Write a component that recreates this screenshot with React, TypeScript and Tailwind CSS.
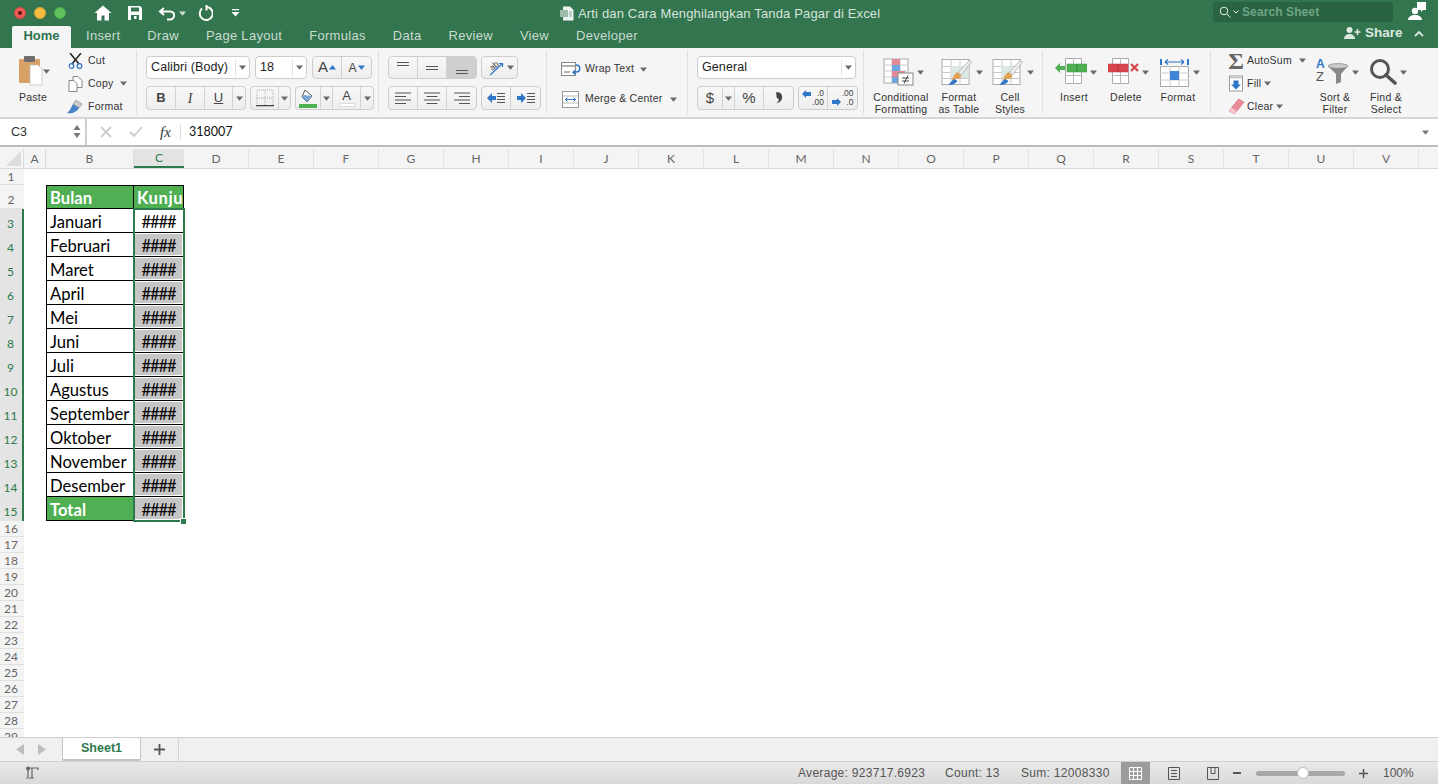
import React from "react";

const ui = { fontFamily: '"Liberation Sans", Arial, sans-serif' };
const cal = { fontFamily: 'Lato, "Liberation Sans", sans-serif' };

const Caret = ({ c = "#6a6a6a" }: { c?: string }) => (
  <svg width="7" height="5" viewBox="0 0 7 5" className="shrink-0"><path d="M0 0.5h7L3.5 4.8z" fill={c} /></svg>
);

const Seg = ({ w, children, active }: { w: number; children?: React.ReactNode; active?: boolean }) => (
  <div style={{ width: w }} className={`flex items-center justify-center border-r border-[#d2d2d2] last:border-r-0 h-full ${active ? "bg-[#cfcfcf]" : ""}`}>{children}</div>
);
const Btns = ({ children, className = "" }: { children: React.ReactNode; className?: string }) => (
  <div className={`flex h-[23px] rounded-[4px] border border-[#cdcdcd] bg-gradient-to-b from-[#f8f8f8] to-[#eeeeee] overflow-hidden ${className}`}>{children}</div>
);
const Select = ({ w, label, caretW = 14 }: { w: number; label: string; caretW?: number }) => (
  <div style={{ width: w }} className="flex items-center h-[23px] rounded-[4px] border border-[#cdcdcd] bg-white text-[12.5px] tracking-[0.1px] text-[#222] pl-[4px]">
    <span className="flex-1">{label}</span>
    <span style={{ width: caretW }} className="flex justify-center items-center border-l border-[#e2e2e2] h-[16px]"><Caret /></span>
  </div>
);

const Lines = ({ a }: { a: "l" | "c" | "r" }) => {
  const w = [16, 11, 16, 11];
  return (
    <svg width="16" height="12" viewBox="0 0 16 12">
      {[0.5, 4, 7.5, 11].map((y, i) => {
        const x = a === "l" ? 0 : a === "c" ? (16 - w[i]) / 2 : 16 - w[i];
        return <rect key={y} x={x} y={y} width={w[i]} height="1" fill="#555" />;
      })}
    </svg>
  );
};
const VAlign = ({ y }: { y: number }) => (
  <svg width="16" height="14" viewBox="0 0 16 14"><rect x="2" y={y} width="12" height="1" fill="#555" /><rect x="2" y={y + 3} width="12" height="1" fill="#555" /></svg>
);
const Indent = ({ flip }: { flip?: boolean }) => (
  <svg width="18" height="12" viewBox="0 0 18 12">
    {flip ? <path d="M0 4h4V1l5 5-5 5V8H0z" fill="#2f75c8" /> : <path d="M9 4H5V1L0 6l5 5V8h4z" fill="#2f75c8" />}
    {[1, 4, 7, 10].map((y) => <rect key={y} x="10" y={y} width="8" height="1" fill="#555" />)}
  </svg>
);

const SmallRow = ({ icon, label, caret = -1, gap }: { icon: React.ReactNode; label: string; caret?: number; gap: number }) => (
  <div className="flex items-center h-[23px] shrink-0">
    <span className="w-[20px] flex justify-center">{icon}</span>
    <span style={{ marginLeft: gap }} className="text-[10.5px] tracking-[0.25px] text-[#333]">{label}</span>
    {caret >= 0 && <span style={{ marginLeft: caret }}><Caret /></span>}
  </div>
);

const Big = ({ w, icon, l1, l2 }: { w: number; icon: React.ReactNode; l1: string; l2?: string }) => (
  <div style={{ width: w }} className="flex flex-col items-center shrink-0">
    <div className="h-[35px] shrink-0 pt-[2px] ml-[4px] flex items-start justify-center gap-[3px]">
      {icon}
      <span className="mt-[12px]"><Caret /></span>
    </div>
    <div className="text-[10.5px] leading-[12px] tracking-[0.25px] text-center text-[#333] whitespace-nowrap">{l1}{l2 && <br />}{l2}</div>
  </div>
);

const Sheetlet = ({ children }: { children?: React.ReactNode }) => (
  <svg width="33" height="28" viewBox="0 0 32 28">
    <rect x="1.5" y="1.5" width="27" height="25" fill="#fff" stroke="#aaa" />
    <path d="M1.5 8.5h27M1.5 14.5h27M1.5 20.5h27M10.5 1.5v25M19.5 1.5v25" stroke="#c9c9c9" />
    {children}
  </svg>
);
const Brush = () => (
  <>
    <path d="M29 2l2 2-10 13-3-3z" fill="#ececec" stroke="#999" strokeWidth=".6" />
    <path d="M17 14l4 4c-1 3-4 3-6 3l-3 2c-1-2 1-6 5-9z" fill="#e0a252" />
    <path d="M8 27c2-3 4-5 6-6l3 2c-2 3-6 4-9 4z" fill="#2f75c8" />
  </>
);

const tabs = ["Insert", "Draw", "Page Layout", "Formulas", "Data", "Review", "View", "Developer"];
const cols = "DEFGHIJKLMNOPQRSTUV".split("");
const months = ["Januari", "Februari", "Maret", "April", "Mei", "Juni", "Juli", "Agustus", "September", "Oktober", "November", "Desember"];
const thin = Array.from({ length: 14 }, (_, i) => i + 16);

export default function App() {
  return (
    <div style={ui} className="w-[1438px] h-[784px] overflow-hidden flex flex-col bg-white relative">
      {/* Title + tabs */}
      <div className="h-[48px] bg-[#33754f] shrink-0 flex flex-col">
        <div className="h-[26px] flex items-center relative">
          <div className="flex items-center gap-[8px] ml-[14px]">
            <span className="w-[12px] h-[12px] rounded-full bg-[#ee5b53] border border-[#d34a43] flex items-center justify-center"><span className="w-[4px] h-[4px] rounded-full bg-[#5c1410]" /></span>
            <span className="w-[12px] h-[12px] rounded-full bg-[#f5bd3f] border border-[#dca62f]" />
            <span className="w-[12px] h-[12px] rounded-full bg-[#5fc25a] border border-[#4dab49]" />
          </div>
          <div className="ml-[28px] flex items-center">
            <svg width="18" height="16" viewBox="0 0 18 16"><path d="M9 0.5L0.5 8h2.5v7.5h4.5V10.5h3v5H15V8h2.5z" fill="#fff" /></svg>
            <svg className="ml-[15px]" width="16" height="16" viewBox="0 0 16 16"><path d="M1 1h12l2 2v12H1z" fill="#fff" /><rect x="4" y="2.5" width="8" height="4" fill="#33754f" /><rect x="4" y="10" width="8" height="5" fill="#33754f" /><rect x="7" y="11" width="2.5" height="3" fill="#fff" /></svg>
            <svg className="ml-[15px]" width="18" height="16" viewBox="0 0 18 16"><path d="M6 3L2 6.5 6 10M2.5 6.5H12c6 0 5 8 0 8H9" fill="none" stroke="#fff" strokeWidth="2" /></svg>
            <span className="ml-[3px]"><svg width="7" height="5" viewBox="0 0 7 5"><path d="M0 .5h7L3.5 4.8z" fill="#cfe0d6" /></svg></span>
            <svg className="ml-[11px]" width="16" height="16" viewBox="0 0 16 16"><path d="M5 3.5a6.5 6.5 0 1 0 5-1.5M9.500 0v5.500" fill="none" stroke="#fff" strokeWidth="2" /></svg>
            <svg className="ml-[18px]" width="9" height="8" viewBox="0 0 9 8"><rect x="1" y="0" width="7" height="1.3" fill="#fff" /><path d="M0.5 3h8L4.5 7.5z" fill="#fff" /></svg>
          </div>
          <div className="absolute left-[560px] top-[4px] flex items-center gap-[4px] text-[13px] tracking-[0.16px] text-[#d6e4dc] whitespace-nowrap">
            <svg width="14" height="15" viewBox="0 0 14 15"><path d="M3 0.5h7l3.5 3.5v10.5H3z" fill="#eef3f0" /><rect x="0" y="4" width="8" height="7" fill="#9cbcaa" /><path d="M9 6h3M9 8h3M9 10h3" stroke="#8aa" /></svg>
            <span>Arti dan Cara Menghilangkan Tanda Pagar di Excel</span>
          </div>
          <div className="absolute left-[1213px] top-[2px] w-[180px] h-[20px] rounded-[4px] bg-[#2a6342] flex items-center pl-[6px]">
            <svg width="12" height="12" viewBox="0 0 12 12"><circle cx="5" cy="5" r="3.8" fill="none" stroke="#e5efe9" /><path d="M8 8l3.5 3.5" stroke="#e5efe9" /></svg>
            <svg className="ml-[2px]" width="6" height="4" viewBox="0 0 6 4"><path d="M.5.5L3 3 5.5.5" fill="none" stroke="#e5efe9" /></svg>
            <span className="ml-[3px] text-[12px] text-[#6fa585] font-bold tracking-[0.1px]">Search Sheet</span>
          </div>
          <svg className="absolute left-[1408px] top-[2px]" width="18" height="18" viewBox="0 0 18 18"><path d="M9 0h9v8h-3l-2 2V8H9z" fill="#fff" /><circle cx="7" cy="9" r="3.2" fill="#fff" /><path d="M0 18c0-3 3-5 7-5s7 2 7 5z" fill="#fff" /></svg>
        </div>
        <div className="h-[22px] flex items-end relative text-[13px] font-medium">
          <div className="ml-[12px] w-[59px] h-[22px] pb-[2px] bg-[#f5f5f5] rounded-t-[2px] flex items-center justify-center font-bold text-[#2f7350]">Home</div>
          <div className="flex h-[22px] pb-[2px] items-center gap-[27px] ml-[15px] text-[#c8dcd0] tracking-[0.3px]">
            {tabs.map((t) => <span key={t}>{t}</span>)}
          </div>
          <div className="absolute left-[1344px] -top-[3px] flex items-center text-[#dbe8e0] text-[13.5px] font-bold">
            <svg width="18" height="14" viewBox="0 0 18 14"><circle cx="5.5" cy="4" r="3" fill="#dbe8e0" /><path d="M0 13c0-3 2.5-5 5.500-5s5.500 2 5.500 5z" fill="#dbe8e0" /><path d="M13.500 3v6M10.500 6h6" stroke="#dbe8e0" strokeWidth="1.600" /></svg>
            <span className="ml-[3px]">Share</span>
            <svg className="ml-[11px]" width="10" height="7" viewBox="0 0 10 7"><path d="M1 6l4-4 4 4" fill="none" stroke="#dbe8e0" strokeWidth="1.800" /></svg>
          </div>
        </div>
      </div>

      {/* Ribbon */}
      <div className="h-[71px] shrink-0 flex bg-[#f5f5f5] border-b-2 border-[#d6d6d6]">
        {/* Clipboard */}
        <div className="w-[137px] shrink-0 flex pl-[13px] pt-[5px] my-[3px] border-r border-[#e0e0e0]">
          <div className="w-[40px] flex flex-col items-center">
            <div className="h-[34px] shrink-0 flex items-start">
              <svg width="26" height="30" viewBox="0 0 26 30">
                <rect x="2" y="3" width="21" height="24" rx="1" fill="#d8a266" />
                <rect x="7" y="0" width="11" height="6" rx="1" fill="#6e6e6e" />
                <path d="M13 9h8l4 4v16H13z" fill="#fff" stroke="#bbb" strokeWidth=".7" />
              </svg>
              <span className="mt-[13px]"><Caret /></span>
            </div>
            <span className="text-[10.5px] leading-[12px] tracking-[0.25px] mt-[1px] text-[#333]">Paste</span>
          </div>
          <div className="ml-[12px] -mt-[8px] flex flex-col pt-[1px]">
            <SmallRow gap={3} label="Cut" icon={<svg width="15" height="16" viewBox="0 0 15 16"><path d="M2 0l9 11M13 0L4 11" stroke="#222" strokeWidth="1.500" /><circle cx="3.500" cy="13" r="2.300" fill="none" stroke="#2f75c8" strokeWidth="1.200" /><circle cx="11.500" cy="13" r="2.300" fill="none" stroke="#2f75c8" strokeWidth="1.200" /></svg>} />
            <SmallRow gap={3} label="Copy" caret={6} icon={<svg width="15" height="16" viewBox="0 0 15 16"><path d="M5 0.500h5l4 4v7H5z" fill="#fff" stroke="#888" /><path d="M1 4.500h5l3 3v8H1z" fill="#fff" stroke="#888" /></svg>} />
            <SmallRow gap={3} label="Format" icon={<svg width="16" height="15" viewBox="0 0 16 15"><path d="M9 1l6 4-3 4-6-4z" fill="#c9c9c9" stroke="#888" strokeWidth=".6" /><path d="M6 5l6 4c-2 4-7 6-12 5 3-2 4-6 6-9z" fill="#4a84c6" /></svg>} />
          </div>
        </div>
        {/* Font */}
        <div className="w-[242px] shrink-0 pl-[9px] pt-[5px] my-[3px] border-r border-[#e0e0e0] flex flex-col gap-[7px]">
          <div className="flex gap-[5px]">
            <Select w={104} label="Calibri (Body)" caretW={14} />
            <Select w={52} label="18" caretW={14} />
            <Btns>
              <Seg w={29}><span className="text-[15px] text-[#444]">A</span><svg className="ml-[1px]" width="7" height="5" viewBox="0 0 7 5"><path d="M0 4.500h7L3.500 0z" fill="#2f75c8" /></svg></Seg>
              <Seg w={29}><span className="text-[12px] text-[#444]">A</span><svg className="ml-[1px]" width="7" height="5" viewBox="0 0 7 5"><path d="M0 .500h7L3.500 5z" fill="#2f75c8" /></svg></Seg>
            </Btns>
          </div>
          <div className="flex gap-[4px]">
            <Btns className="h-[24px]">
              <Seg w={29}><span className="text-[13px] font-bold text-[#444]">B</span></Seg>
              <Seg w={29}><span style={{ fontFamily: '"Liberation Serif", serif' }} className="text-[14px] italic text-[#444]">I</span></Seg>
              <Seg w={28}><span className="text-[13px] underline text-[#444]">U</span></Seg>
              <Seg w={12}><Caret /></Seg>
            </Btns>
            <Btns className="h-[24px]">
              <Seg w={28}><svg width="18" height="18" viewBox="0 0 18 18"><path d="M1 1h16v16H1zM9 1v16M1 9h16" fill="none" stroke="#aaa" strokeDasharray="1 1" /><rect y="16" width="18" height="1.200" fill="#444" /></svg></Seg>
              <Seg w={11}><Caret /></Seg>
            </Btns>
            <Btns className="h-[24px]">
              <Seg w={25}><svg width="18" height="19" viewBox="0 0 18 19"><path d="M6 1l7 6-5 6-5-5z" fill="#fff" stroke="#555" /><path d="M5 6l8 1-5 6-5-5z" fill="#7aa7d8" /><rect y="15" width="18" height="4" fill="#4faf52" /></svg></Seg>
              <Seg w={12}><Caret /></Seg>
              <Seg w={28}><span className="flex flex-col items-center leading-none"><span className="text-[13px] text-[#444]">A</span><span className="w-[16px] h-[4px] bg-white border border-[#ddd] mt-[1px]" /></span></Seg>
              <Seg w={12}><Caret /></Seg>
            </Btns>
          </div>
        </div>
        {/* Alignment */}
        <div className="w-[168px] shrink-0 pl-[9px] pt-[5px] my-[3px] border-r border-[#e0e0e0] flex flex-col gap-[7px]">
          <div className="flex gap-[4px]">
            <Btns>
              <Seg w={29}><VAlign y={1} /></Seg>
              <Seg w={29}><VAlign y={5} /></Seg>
              <Seg w={29} active><VAlign y={9} /></Seg>
            </Btns>
            <Btns>
              <Seg w={35}>
                <svg width="20" height="18" viewBox="0 0 20 18"><path d="M4 16L16 5M13 4.500h3.500V8" fill="none" stroke="#2f75c8" strokeWidth="1.200" /><text x="4" y="10" fontSize="8.500" fill="#444" transform="rotate(-40 8 8)">ab</text></svg>
                <span className="ml-[1px]"><Caret /></span>
              </Seg>
            </Btns>
          </div>
          <div className="flex gap-[4px]">
            <Btns className="h-[24px]">
              <Seg w={29}><Lines a="l" /></Seg>
              <Seg w={29}><Lines a="c" /></Seg>
              <Seg w={29}><Lines a="r" /></Seg>
            </Btns>
            <Btns className="h-[24px]">
              <Seg w={29}><Indent /></Seg>
              <Seg w={29}><Indent flip /></Seg>
            </Btns>
          </div>
        </div>
        {/* Wrap / merge */}
        <div className="w-[141px] shrink-0 pl-[14px] pt-[7px] my-[3px] border-r border-[#e0e0e0] flex flex-col gap-[8px] text-[10.5px] tracking-[0.25px] text-[#333]">
          <div className="flex items-center h-[22px]">
            <svg width="20" height="14" viewBox="0 0 20 14"><rect x=".5" y=".5" width="14" height="13" fill="#fff" stroke="#888" /><path d="M1 4h13M3 10h6" stroke="#666" /><path d="M15 3c5 0 5 7 0 7h-3" fill="none" stroke="#2f75c8" strokeWidth="1.500" /><path d="M14 7.500V13l-3-2.500z" fill="#2f75c8" /></svg>
            <span className="ml-[4px]">Wrap Text</span>
            <span className="ml-[6px]"><Caret /></span>
          </div>
          <div className="flex items-center h-[22px]">
            <svg className="ml-[1px]" width="18" height="17" viewBox="0 0 18 17"><rect x=".5" y=".5" width="16" height="16" fill="#fff" stroke="#999" /><path d="M1 5h15M1 12h15" stroke="#bbb" /><path d="M3 8.500h11M3.500 8.500l2-2M3.500 8.500l2 2M13.500 8.500l-2-2M13.500 8.500l-2 2" stroke="#2f75c8" /></svg>
            <span className="ml-[5px]">Merge &amp; Center</span>
            <span className="ml-[7px]"><Caret /></span>
          </div>
        </div>
        {/* Number */}
        <div className="w-[176px] shrink-0 pl-[9px] pt-[5px] my-[3px] border-r border-[#e0e0e0] flex flex-col gap-[7px]">
          <Select w={159} label="General" caretW={14} />
          <div className="flex gap-[4px]">
            <Btns className="h-[24px]">
              <Seg w={25}><span className="text-[15px] text-[#444]">$</span></Seg>
              <Seg w={12}><Caret /></Seg>
              <Seg w={29}><span className="text-[15px] text-[#444]">%</span></Seg>
              <Seg w={29}><svg width="8" height="12" viewBox="0 0 8 12"><path d="M1 0.500c4-1 7 2 6 6-.5 2.500-3 4.500-6 5 2-1.500 3-3 2.800-4.500C2.500 7 1 5.500 1.500 3.500z" fill="#444" /></svg></Seg>
            </Btns>
            <Btns className="h-[24px]">
              <Seg w={29}><span className="relative w-[22px] h-[18px] text-[8.5px] leading-[9px] text-[#444] text-right"><svg className="absolute left-0 top-[1px]" width="9" height="8" viewBox="0 0 9 8"><path d="M0 4l4-4v2h5v4H4v2z" fill="#2f75c8" /></svg>.0<br />.00</span></Seg>
              <Seg w={29}><span className="relative w-[22px] h-[18px] text-[8.5px] leading-[9px] text-[#444] text-right"><svg className="absolute left-0 bottom-[1px]" width="9" height="8" viewBox="0 0 9 8"><path d="M9 4L5 0v2H0v4h5v2z" fill="#2f75c8" /></svg>.00<br />.0</span></Seg>
            </Btns>
          </div>
        </div>
        {/* Styles */}
        <div className="w-[179px] shrink-0 pl-[8px] pt-[5px] my-[3px] border-r border-[#e0e0e0] flex">
          <Big w={58} l1="Conditional" l2="Formatting" icon={
            <svg width="31" height="28" viewBox="0 0 31 28">
              <rect x="1" y="1" width="24" height="24" fill="#fff" stroke="#aaa" />
              <path d="M1 7h24M1 13h24M1 19h24M9 1v24M17 1v24" stroke="#ccc" />
              <rect x="9" y="1" width="8" height="6" fill="#e58a94" /><rect x="9" y="7" width="8" height="6" fill="#6ea6df" /><rect x="9" y="13" width="8" height="6" fill="#e58a94" /><rect x="9" y="19" width="8" height="6" fill="#6ea6df" /><rect x="17" y="13" width="5" height="6" fill="#e58a94" />
              <rect x="15" y="15" width="15" height="12" fill="#fff" stroke="#888" />
              <path d="M19 20h7M19 23h7M25 17.500l-4 8" stroke="#333" strokeWidth=".9" fill="none" />
            </svg>} />
          <Big w={58} l1="Format" l2="as Table" icon={<Sheetlet><rect x="10" y="8" width="18" height="12" fill="#dce8e4" /><Brush /></Sheetlet>} />
          <Big w={44} l1="Cell" l2="Styles" icon={<Sheetlet><rect x="10" y="8" width="9" height="12" fill="#dce8e4" /><Brush /></Sheetlet>} />
        </div>
        {/* Cells */}
        <div className="w-[168px] shrink-0 pl-[5px] pt-[5px] my-[3px] border-r border-[#e0e0e0] flex">
          <Big w={52} l1="Insert" icon={
            <svg width="32" height="27" viewBox="0 0 32 27"><path d="M10.500 0.500h16v25h-16z" fill="#fff" stroke="#aaa" /><path d="M10 17.500h17M18.500 0v26" stroke="#bbb" /><rect x="12" y="6" width="20" height="8" fill="#4faf52" stroke="#3d9a41" strokeWidth=".5" /><path d="M22 6v8" stroke="#2f8a35" /><path d="M0 10l5-5v3h5v4H5v3z" fill="#4faf52" /></svg>} />
          <Big w={52} l1="Delete" icon={
            <svg width="31" height="27" viewBox="0 0 31 27"><path d="M4.500 0.500h16v25h-16z" fill="#fff" stroke="#aaa" /><path d="M4 17.500h17M12.500 0v26" stroke="#bbb" /><rect x="0" y="6" width="20" height="8" fill="#d9454d" stroke="#bf3a42" strokeWidth=".5" /><path d="M10 6v8" stroke="#a93038" /><path d="M23 6l7 7M30 6l-7 7" stroke="#d9454d" strokeWidth="2.200" /></svg>} />
          <Big w={52} l1="Format" icon={
            <svg width="30" height="29" viewBox="0 0 30 29"><rect x=".5" y="8.500" width="28" height="20" fill="#fff" stroke="#aaa" /><path d="M0 15h29M0 22h29M10 8v20M19 8v20" stroke="#ccc" /><rect x="10" y="13" width="9" height="9" fill="#3d84d6" /><path d="M1 1v6M28 1v6" stroke="#2f75c8" strokeWidth="2" /><path d="M5 4h19M5 4l3-2.500M5 4l3 2.500M24 4l-3-2.500M24 4l-3 2.500" stroke="#2f75c8" strokeWidth="1.200" fill="none" /></svg>} />
        </div>
        {/* Editing */}
        <div className="flex-1 flex pl-[15px]">
          <div className="w-[83px] shrink-0 flex flex-col pt-[1px]">
            <SmallRow gap={1} caret={7} label="AutoSum" icon={<span style={{ fontFamily: '"Liberation Serif", serif' }} className="text-[24px] leading-none font-bold text-[#666]">Σ</span>} />
            <SmallRow gap={1} caret={3} label="Fill" icon={<svg width="14" height="17" viewBox="0 0 14 16"><rect x=".5" y=".5" width="13" height="15" fill="#fff" stroke="#999" /><rect x="1" y="1" width="12" height="2" fill="#ccc" /><path d="M4.500 5h5v4H12l-5 5-5-5h2.500z" fill="#2f75c8" /></svg>} />
            <SmallRow gap={1} caret={3} label="Clear" icon={<svg width="18" height="17" viewBox="0 0 17 16"><path d="M11 1l5 3-9 11-5-3z" fill="#ea8d98" stroke="#c96570" strokeWidth=".6" /><path d="M2 12l5 3 2-3-5-3z" fill="#f8c5cb" /></svg>} />
          </div>
          <div className="flex pt-[8px]">
            <Big w={52} l1="Sort &" l2="Filter" icon={
              <svg width="34" height="29" viewBox="0 0 34 29"><text x="1" y="10" fontSize="12" fontWeight="bold" fill="#2f75c8">A</text><text x="1" y="23" fontSize="13" fill="#555">Z</text><path d="M13 8h20l-7 8v8l-5 2V16z" fill="#888" /><ellipse cx="23" cy="8" rx="10" ry="2.400" fill="#ccc" stroke="#777" strokeWidth=".6" /></svg>} />
            <Big w={50} l1="Find &" l2="Select" icon={
              <svg width="28" height="27" viewBox="0 0 28 27"><circle cx="11" cy="11" r="8.500" fill="none" stroke="#555" strokeWidth="3" /><path d="M17 17l9 8" stroke="#555" strokeWidth="3.600" strokeLinecap="round" /></svg>} />
          </div>
        </div>
      </div>

      {/* Formula bar */}
      <div className="h-[26px] shrink-0 flex bg-white items-stretch">
        <div className="w-[87px] shrink-0 flex items-center border-r-2 border-[#cfcfcf] bg-white text-[12.5px] text-[#333] pl-[11px] relative">
          C3
          <svg className="absolute right-[4px] top-[5px]" width="8" height="15" viewBox="0 0 8 15"><path d="M4 1l3.500 5H.500zM4 14l3.500-5H.500z" fill="#777" /></svg>
        </div>
        <div className="w-[94px] shrink-0 flex items-center relative">
          <svg className="ml-[13px]" width="12" height="12" viewBox="0 0 12 12"><path d="M1 1l10 10M11 1L1 11" stroke="#ccc" strokeWidth="1.800" /></svg>
          <svg className="ml-[17px]" width="14" height="12" viewBox="0 0 14 12"><path d="M1 6l4 4 8-9" fill="none" stroke="#ccc" strokeWidth="1.800" /></svg>
          <span style={{ fontFamily: '"Liberation Serif", serif' }} className="ml-[17px] text-[15px] italic text-[#333]">fx</span>
          <span className="absolute right-0 top-[5px] h-[16px] w-px bg-[#ddd]" />
        </div>
        <div style={cal} className="flex-1 flex items-center pl-[8px] pt-[1px] text-[12.5px] text-[#111]">318007</div>
        <div className="w-[16px] flex items-center"><Caret c="#777" /></div>
      </div>
      <div className="h-[4px] shrink-0 border-t-2 border-[#bcbcbc] bg-[#f6f6f6]" />

      {/* Column headers */}
      <div style={cal} className="h-[20px] shrink-0 flex bg-[#f4f4f4] border-b border-[#d8d8d8] text-[12px] text-[#666]">
        <div className="w-[24px] shrink-0 border-r border-[#dcdcdc] relative">
          <svg className="absolute left-[6px] top-[2px]" width="15" height="15" viewBox="0 0 15 15"><path d="M15 0v15H0z" fill="#dcdcdc" /></svg>
        </div>
        <div className="w-[22px] shrink-0 pt-[1px] flex items-center justify-center border-r border-[#dcdcdc]">A</div>
        <div className="w-[88px] shrink-0 pt-[1px] flex items-center justify-center border-r border-[#dcdcdc]">B</div>
        <div className="w-[50px] shrink-0 pt-[1px] flex items-center justify-center bg-[#e4e4e4] border-b-2 border-[#2f7a4d] text-[#2f7a4d]">C</div>
        {cols.map((c) => <div key={c} className="w-[65px] shrink-0 pt-[1px] flex items-center justify-center border-r border-[#e2e2e2]">{c}</div>)}
        <div className="flex-1" />
      </div>

      {/* Sheet */}
      <div className="flex-1 min-h-0 flex overflow-hidden">
        <div style={cal} className="w-[24px] shrink-0 bg-[#f4f4f4] flex flex-col text-[12px] text-[#666]">
          <div className="h-[16px] shrink-0 flex items-center justify-center border-b border-[#e0e0e0] pr-[2px]">1</div>
          <div className="h-[24px] shrink-0 flex items-center justify-center border-b border-[#e0e0e0] pr-[2px] pt-[6px]">2</div>
          {Array.from({ length: 13 }, (_, i) => i + 3).map((n) => (
            <div key={n} className="h-[24px] shrink-0 flex items-end justify-center bg-[#e4e4e4] border-r-2 border-[#2f7a4d] text-[#2f7a4d] pr-[1px]">{n}</div>
          ))}
          {thin.map((n) => (
            <div key={n} className="h-[16px] shrink-0 flex items-center justify-center border-b border-[#e0e0e0] pr-[2px]">{n}</div>
          ))}
        </div>
        <div className="flex-1 pl-[22px] pt-[16px] bg-white">
          <div style={cal} className="relative w-[138px] text-[16.6px] text-black">
            <div className="flex h-[24px]">
              <div className="w-[88px] bg-[#4faf52] text-white font-bold border border-black pl-[3px] leading-[25px]">Bulan</div>
              <div className="w-[50px] bg-[#4faf52] text-white font-bold border-y border-r border-black pl-[3px] leading-[25px] tracking-[0.6px] overflow-hidden whitespace-nowrap">Kunjungan</div>
            </div>
            {months.map((m, i) => (
              <div key={m} className="flex h-[24px]">
                <div className="w-[88px] border-x border-b border-black pl-[3px] leading-[26px] whitespace-nowrap">{m}</div>
                <div className="w-[50px] border-b border-r border-r-white border-b-black p-px">
                  <div className={`h-full text-center leading-[24px] tracking-[-1.1px] ${i === 0 ? "bg-white" : "bg-[#c6c6c6]"}`}>####</div>
                </div>
              </div>
            ))}
            <div className="flex h-[24px]">
              <div className="w-[88px] bg-[#4faf52] text-white font-bold border-x border-b border-black pl-[3px] leading-[26px]">Total</div>
              <div className="w-[50px] border-b border-r border-r-white border-b-black p-px">
                <div className="h-full text-center leading-[24px] tracking-[-1.1px] bg-[#c6c6c6]">####</div>
              </div>
            </div>
            <div className="absolute left-[87px] top-[23px] w-[52px] h-[314px] border-2 border-[#2f7a4d] pointer-events-none" />
            <div className="absolute left-[135px] top-[334px] w-[5px] h-[5px] bg-[#2f7a4d] outline outline-1 outline-white" />
          </div>
        </div>
      </div>

      {/* Sheet tabs */}
      <div className="h-[25px] shrink-0 flex bg-[#f0f0f0] border-y border-[#cfcfcf] items-stretch">
        <div className="w-[62px] flex items-center pl-[16px] gap-[14px] shrink-0">
          <svg width="8" height="11" viewBox="0 0 8 11"><path d="M8 0v11L0 5.500z" fill="#bdbdbd" /></svg>
          <svg width="8" height="11" viewBox="0 0 8 11"><path d="M0 0v11l8-5.500z" fill="#bdbdbd" /></svg>
        </div>
        <div className="w-[79px] bg-white border-x border-b-2 border-[#c4c4c4] rounded-b-[2px] flex items-center justify-center text-[12.5px] font-bold text-[#2f7a4d]">Sheet1</div>
        <div className="w-[38px] flex items-center justify-center border-r border-[#d4d4d4]">
          <svg width="11" height="11" viewBox="0 0 11 11"><path d="M5.500 0v11M0 5.500h11" stroke="#555" strokeWidth="1.800" /></svg>
        </div>
      </div>

      {/* Status bar */}
      <div className="h-[22px] shrink-0 flex items-stretch bg-gradient-to-b from-[#e9e9e9] to-[#d9d9d9] text-[12px] text-[#555]">
        <div className="w-[798px] shrink-0 flex items-center pl-[25px]">
          <svg width="15" height="14" viewBox="0 0 15 14"><circle cx="3" cy="2.500" r="2" fill="#666" /><path d="M3 4v7M5 2h8v2M7 2v10M1 12h8" fill="none" stroke="#666" strokeWidth="1.200" /></svg>
        </div>
        <div className="flex items-center whitespace-nowrap tracking-[0.3px]">
          <span className="w-[147px]">Average: 923717.6923</span>
          <span className="w-[76px]">Count: 13</span>
          <span className="w-[100px]">Sum: 12008330</span>
        </div>
        <div className="w-[29px] bg-[#9c9c9c] flex items-center justify-center">
          <svg width="13" height="13" viewBox="0 0 13 13"><path d="M.500.500h12v12H.500zM4.500.500v12M8.500.500v12M.500 4.500h12M.500 8.500h12" fill="none" stroke="#fff" /></svg>
        </div>
        <div className="w-[48px] flex items-center justify-center">
          <svg width="12" height="13" viewBox="0 0 12 13"><path d="M.500.500h11v12H.500z" fill="none" stroke="#555" /><path d="M3 3.500h6M3 6.500h6M3 9.500h6" stroke="#555" /></svg>
        </div>
        <div className="w-[29px] flex items-center justify-center">
          <svg width="12" height="13" viewBox="0 0 12 13"><path d="M.500.500h11v12H.500zM4 .500v6h4v-6" fill="none" stroke="#555" /></svg>
        </div>
        <div className="flex items-center ml-[6px]">
          <span className="w-[8px] h-[2px] bg-[#555]" />
          <div className="ml-[15px] w-[89px] h-[5px] rounded-full bg-[#a8a8a8] relative">
            <span className="absolute left-[41px] -top-[4px] w-[12px] h-[12px] rounded-full bg-white border border-[#bbb]" />
          </div>
          <svg className="ml-[14px]" width="9" height="9" viewBox="0 0 9 9"><path d="M4.500 0v9M0 4.500h9" stroke="#555" strokeWidth="1.500" /></svg>
          <span className="ml-[15px]">100%</span>
        </div>
      </div>
    </div>
  );
}
